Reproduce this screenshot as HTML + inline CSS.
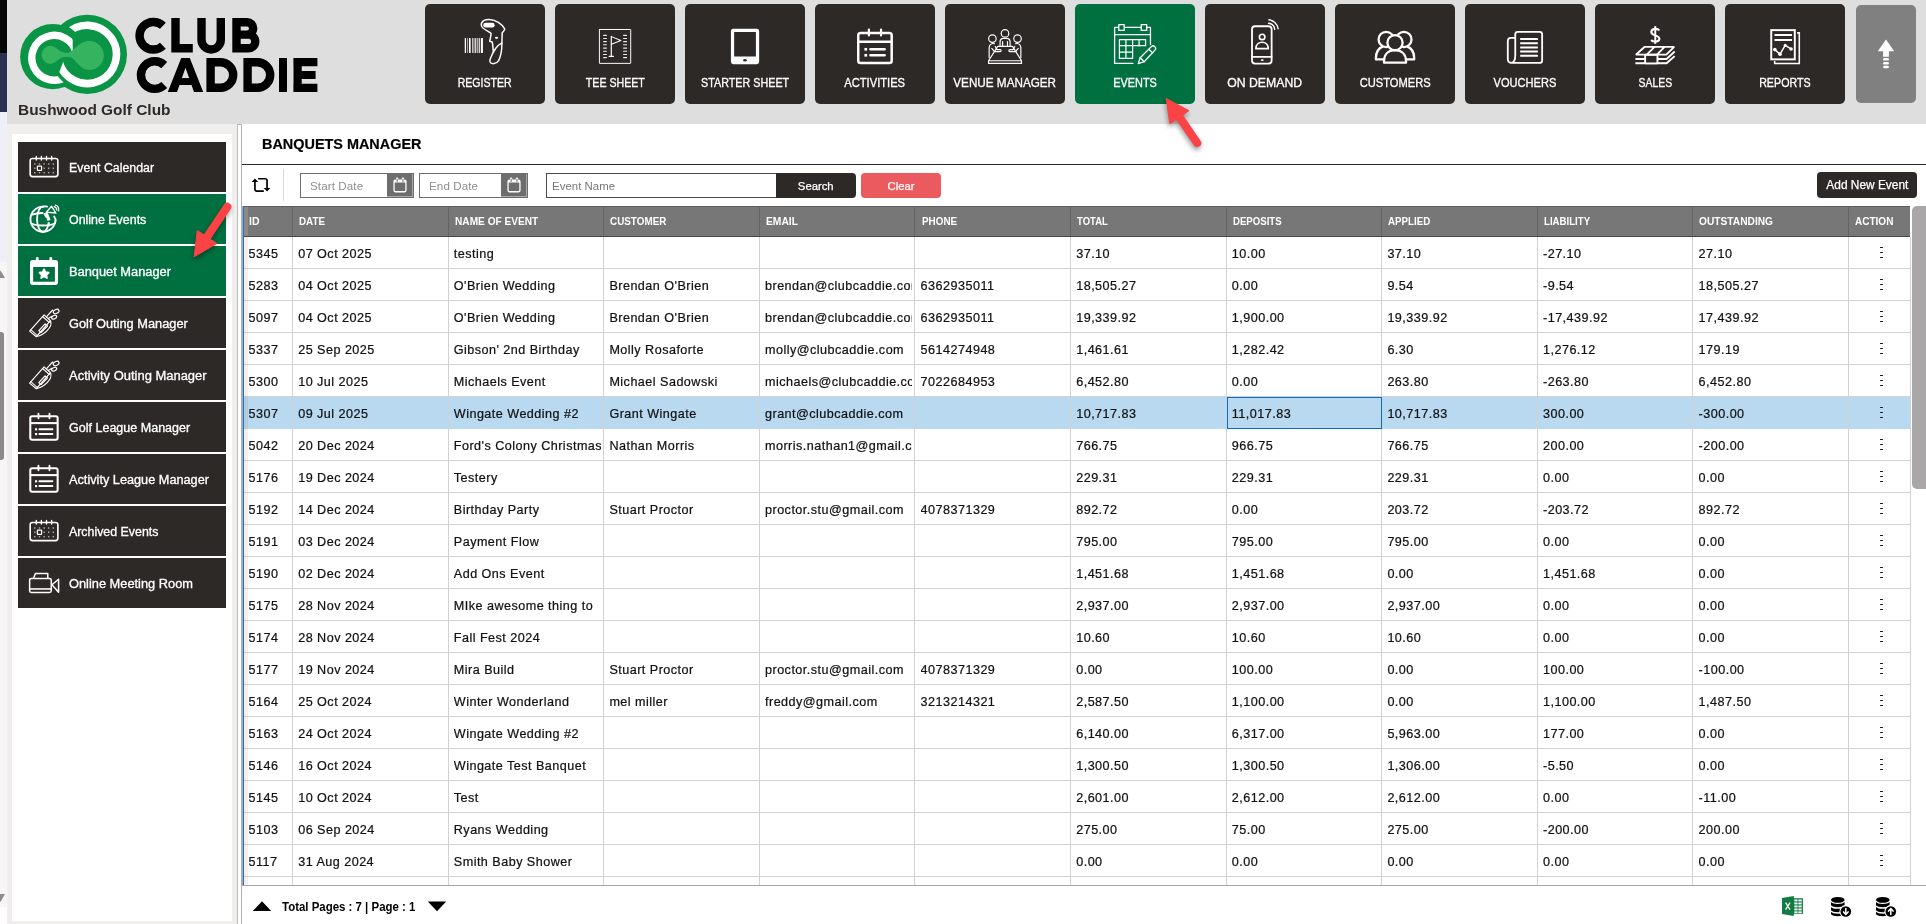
<!DOCTYPE html>
<html><head><meta charset="utf-8"><title>Banquets Manager</title>
<style>
*{box-sizing:border-box;margin:0;padding:0}
html,body{width:1926px;height:924px;overflow:hidden;background:#fff}
body{position:relative;font-family:"Liberation Sans",sans-serif;color:#000}
.a{position:absolute}
svg{position:absolute;overflow:visible}
.nb{position:absolute;top:4px;width:120px;height:100px;border-radius:5px;background:#2d2926}
.nl{position:absolute;left:0;width:120px;top:72.3px;-webkit-text-stroke:.3px #fff;height:15px;line-height:15px;text-align:center;color:#fff;font-size:12px;white-space:nowrap}
.nl span{display:inline-block;transform-origin:50% 50%}
.si{position:absolute;left:18px;width:208px;height:50px;background:#2d2926}
.sl{position:absolute;left:50.6px;top:18px;-webkit-text-stroke:.3px #fff;height:16px;line-height:16px;color:#fff;font-size:12px;white-space:nowrap}
.sl span{display:inline-block;transform-origin:0 50%}
.th{position:absolute;top:206px;height:31px;line-height:30px;color:#fff;font-weight:bold;font-size:11px;white-space:nowrap}
.th span{display:inline-block;transform-origin:0 50%}
.r{position:absolute;left:244px;width:1666px;height:32px;border-bottom:1px solid #d2d2d2}
.c{position:absolute;top:.8px;height:31px;line-height:32px;font-size:12.6px;letter-spacing:.47px;-webkit-text-stroke:.22px #111;white-space:nowrap;overflow:hidden;color:#111}
.vl{position:absolute;top:237px;width:1px;height:648px;background:#d2d2d2}
.dots{position:absolute;left:1635.8px;top:9.6px;width:3.2px;height:1.8px;border-radius:.8px;background:#111;box-shadow:0 4.95px 0 #111,0 9.9px 0 #111}

</style></head>
<body>
<div class="a" style="left:0;top:0;width:7px;height:53px;background:#050505"></div>
<div class="a" style="left:0;top:53px;width:7px;height:59px;background:#2b3050"></div>
<div class="a" style="left:0;top:112px;width:7px;height:150px;background:#eef0f6"></div>
<div class="a" style="left:0;top:262px;width:7px;height:645px;background:#f6f6f6"></div>
<svg style="left:0;top:268px" width="7" height="12" viewBox="0 0 7 12"><path d="M-4,10 L0.5,2.5 L5,10 Z" fill="#8c8c8c"/></svg>
<div class="a" style="left:-4px;top:332px;width:7.5px;height:128px;border-radius:3px;background:#8a8a8a"></div>
<svg style="left:0;top:892px" width="7" height="12" viewBox="0 0 7 12"><path d="M-4,2 L5,2 L0.5,10 Z" fill="#8c8c8c"/></svg>
<div class="a" style="left:7px;top:0;width:1919px;height:124px;background:#dedede"></div>
<svg style="left:0;top:0" width="340" height="124" viewBox="0 0 340 124"><defs><clipPath id="cl"><path d="M0,0 H72.7 V57.8 H130 V130 H0 Z"/></clipPath><clipPath id="cr"><path d="M66.2,25.1 L79.85,35.2 L65.19,56.86 L57.26,77.14 V130 H130 V0 H66.2 Z"/></clipPath></defs><circle cx="52.7" cy="56.7" r="32.6" fill="#0a9445"/><circle cx="87.3" cy="54.4" r="39.7" fill="#0a9445"/><path d="M76.11,53.14 A22.40,22.40 0 1 0 66.40,76.59" fill="none" stroke="#fff" stroke-width="7.4" clip-path="url(#cl)"/><path d="M78.31,82.08 A29.10,29.10 0 0 1 62.10,68.95" fill="none" stroke="#0a9445" stroke-width="15.2"/><path d="M65.67,34.93 A29.10,29.10 0 1 1 58.84,60.45" fill="none" stroke="#fff" stroke-width="7.6" clip-path="url(#cr)"/><path d="M50.6,45.8 C54,45.8 56.5,48.6 59.3,50.4 C62,52 64.5,52.9 67.1,52.9 C70.5,52.9 73.5,49.4 76.6,46.8 C80,43.7 84,41 89.3,41 A14.5,14.5 0 1 1 89.3,70 C83,70 80,66.2 76.6,62.6 C73.5,59.2 72,57.2 69.7,57.1 H64.5 C61.5,57.2 59.5,59 57.6,60.3 C55.5,61.8 53.5,63.9 50.6,63.9 A9.05,9.05 0 1 1 50.6,45.8 Z" fill="#36b35f"/><g fill="none" stroke="#000" stroke-width="8.4"><path d="M162.9,25.8 A13.8,13.8 0 1 0 162.9,45.7"/><path d="M175.5,18 V52.5 M171.3,48.3 H192.8"/><path d="M201.5,18 V39.8 A9.65,9.65 0 0 0 220.8,39.8 V18"/><path d="M236.5,18 V52.5 M232.3,22.2 H247 A6.2,6.2 0 0 1 247,34.6 H236.5 M236.5,34.6 H248.4 A6.85,6.85 0 0 1 248.4,48.3 H232.3"/><path d="M164.3,65.1 A13.8,13.8 0 1 0 164.3,85"/><path d="M210.6,58 V92 M206.4,62.2 H220.4 A12.8,12.8 0 0 1 220.4,87.8 H206.4"/><path d="M247.6,58 V92 M243.4,62.2 H257.4 A12.8,12.8 0 0 1 257.4,87.8 H243.4"/><path d="M283,58 V92" stroke-width="8"/><path d="M297.6,58 V92 M293.4,62.1 H317.4 M297,75 H315.6 M293.4,87.9 H317.4" stroke-width="8.2"/></g><path fill="#000" fill-rule="evenodd" d="M167.8,92 L181.2,58 H189.8 L203.2,92 H194 L191.5,85 H179.5 L177,92 Z M181.9,77.9 H189.1 L185.5,67.8 Z"/></svg>
<div class="a" style="left:17.5px;top:100.7px;height:18px;line-height:18px;font-size:14.4px;font-weight:bold;color:#2d2926;white-space:nowrap"><span style="display:inline-block;transform-origin:0 50%;transform:scaleX(1.0718)">Bushwood Golf Club</span></div>
<div class="nb" style="left:425px;background:#2d2926"><div class="nl"><span style="transform:scaleX(0.8803)">REGISTER</span></div></div>
<svg style="left:455px;top:10px" width="60" height="60" viewBox="0 0 924 924"><rect x="150" y="432" width="20" height="230" fill="#fff" opacity="1"/><rect x="186" y="432" width="12" height="230" fill="#fff" opacity="0.75"/><rect x="215" y="432" width="26" height="230" fill="#fff" opacity="1"/><rect x="262" y="432" width="20" height="230" fill="#fff" opacity="0.7"/><rect x="286" y="432" width="18" height="230" fill="#fff" opacity="0.55"/><rect x="308" y="432" width="16" height="230" fill="#fff" opacity="0.8"/><rect x="332" y="432" width="24" height="230" fill="#fff" opacity="0.6"/><rect x="365" y="432" width="18" height="230" fill="#fff" opacity="0.9"/><rect x="398" y="432" width="32" height="230" fill="#fff" opacity="1"/><g fill="none" stroke="#fff" stroke-width="23" stroke-linejoin="round" stroke-linecap="round"><path d="M405,235 C398,172 470,140 535,146 C625,152 722,215 765,290 C772,312 742,328 727,350 L722,520 C722,600 702,720 672,780 C642,832 560,842 540,800 C524,760 572,700 592,640 C580,580 586,530 572,492 L534,480 L548,420 L556,362 C520,322 415,300 405,235 Z"/><path d="M722,512 C662,532 622,590 592,648"/></g><rect x="435" y="195" width="176" height="76" rx="38" fill="#fff"/><ellipse cx="640" cy="428" rx="25" ry="17" fill="#fff"/></svg>
<div class="nb" style="left:555px;background:#2d2926"><div class="nl"><span style="transform:scaleX(0.8848)">TEE SHEET</span></div></div>
<svg style="left:585px;top:10px" width="60" height="60" viewBox="0 0 924 924"><g fill="none" stroke="#fff" stroke-linecap="round" stroke-linejoin="round"><rect x="222" y="300" width="482" height="522" stroke-width="15" rx="4"/><g stroke-width="17" opacity=".92"><path d="M286,390 H330 M594,390 H640"/><path d="M286,438 H330 M594,438 H640"/><path d="M286,487 H330 M594,487 H640"/><path d="M286,535 H330 M594,535 H640"/><path d="M286,587 H330 M594,587 H640"/><path d="M286,635 H330 M594,635 H640"/><path d="M286,685 H330 M594,685 H640"/><path d="M286,733 H330 M594,733 H640"/></g><path d="M405,405 V715 M372,715 H438" stroke-width="18"/><path d="M408,410 L552,470 L408,526" stroke-width="16"/></g></svg>
<div class="nb" style="left:685px;background:#2d2926"><div class="nl"><span style="transform:scaleX(0.8957)">STARTER SHEET</span></div></div>
<svg style="left:715px;top:10px" width="60" height="60" viewBox="0 0 924 924"><path fill="#fff" fill-rule="evenodd" d="M283,290 H642 A38,38 0 0 1 680,328 V797 A38,38 0 0 1 642,835 H283 A38,38 0 0 1 245,797 V328 A38,38 0 0 1 283,290 Z M295,340 V715 H630 V340 Z"/><ellipse cx="462" cy="775" rx="28" ry="19" fill="#2d2926"/></svg>
<div class="nb" style="left:815px;background:#2d2926"><div class="nl"><span style="transform:scaleX(0.9304)">ACTIVITIES</span></div></div>
<svg style="left:845px;top:10px" width="60" height="60" viewBox="0 0 924 924"><g fill="none" stroke="#fff" stroke-linecap="round"><rect x="204" y="354" width="515" height="462" rx="36" stroke-width="38"/><path d="M204,490 H719" stroke-width="38" stroke-linecap="butt"/><path d="M368,300 V392 M555,300 V392" stroke-width="34"/><path d="M392,605 H610 M392,697 H610" stroke-width="40"/></g><rect x="299" y="584" width="42" height="42" fill="#fff"/><rect x="299" y="676" width="42" height="42" fill="#fff"/></svg>
<div class="nb" style="left:945px;background:#2d2926"><div class="nl"><span style="transform:scaleX(0.9757)">VENUE MANAGER</span></div></div>
<svg style="left:975px;top:10px" width="60" height="60" viewBox="0 0 924 924"><g fill="none" stroke="#fff" stroke-width="18" stroke-linecap="round" stroke-linejoin="round"><circle cx="462" cy="360" r="58"/><circle cx="268" cy="440" r="58"/><circle cx="655" cy="440" r="58"/><path d="M386,548 V492 C386,455 410,438 440,438 H485 C520,438 540,455 540,492 V548"/><path d="M425,548 V485 M500,548 V485"/><path d="M350,560 H578 L716,782 H209 Z"/><path d="M209,782 V822 H716 V782"/><path d="M300,520 C258,506 222,528 218,580 V735"/><path d="M258,592 L300,642 H385 C408,642 408,610 385,610 H338 L312,562"/><path d="M624,520 C666,506 702,528 706,580 V735"/><path d="M666,592 L624,642 H539 C516,642 516,610 539,610 H586 L612,562"/></g></svg>
<div class="nb" style="left:1075px;background:#007041"><div class="nl"><span style="transform:scaleX(0.9081)">EVENTS</span></div></div>
<svg style="left:1105px;top:10px" width="60" height="60" viewBox="0 0 924 924"><g fill="none" stroke="#fff" stroke-width="20" stroke-linecap="round" stroke-linejoin="round"><path d="M700,530 V268 H148 V822 H430"/><path d="M148,378 H700"/><rect x="212" y="225" width="84" height="90" fill="#007041"/><rect x="558" y="225" width="84" height="90" fill="#007041"/><g stroke-width="19"><path d="M222,455 H625 V550 H222 Z"/><path d="M222,550 V745 H425 V550"/><path d="M222,650 H425 M322,455 V745 M425,455 V550 M525,455 V550"/></g><path d="M512,826 L542,736 L716,562 C734,546 752,550 766,564 C782,580 786,598 772,614 L604,796 Z"/><path d="M542,736 L604,796 M672,606 L734,660"/></g></svg>
<div class="nb" style="left:1205px;background:#2d2926"><div class="nl"><span style="transform:scaleX(1.0199)">ON DEMAND</span></div></div>
<svg style="left:1235px;top:10px" width="60" height="60" viewBox="0 0 924 924"><g fill="none" stroke="#fff" stroke-linecap="round" stroke-linejoin="round"><rect x="262" y="250" width="302" height="575" rx="46" stroke-width="28"/><path d="M262,722 H564" stroke-width="26"/><circle cx="418" cy="415" r="42" stroke-width="26"/><path d="M322,595 C322,530 370,497 418,497 C466,497 512,530 512,595 Z" stroke-width="26"/><path d="M516,205 A108,108 0 0 1 612,297" stroke-width="22"/><path d="M522,151 A162,162 0 0 1 665,289" stroke-width="22"/></g><ellipse cx="420" cy="771" rx="24" ry="13" fill="#fff"/></svg>
<div class="nb" style="left:1335px;background:#2d2926"><div class="nl"><span style="transform:scaleX(0.9286)">CUSTOMERS</span></div></div>
<svg style="left:1365px;top:10px" width="60" height="60" viewBox="0 0 924 924"><g fill="none" stroke="#fff" stroke-width="35" stroke-linejoin="round"><circle cx="326" cy="453" r="117"/><circle cx="599" cy="453" r="117"/><path d="M300,762 H168 V740 C168,640 215,585 275,560"/><path d="M625,762 H757 V740 C757,640 710,585 650,560"/><path d="M293,812 V790 C293,688 355,618 462,618 C570,618 632,688 632,790 V812 Z" fill="#2d2926"/><circle cx="462" cy="503" r="117" fill="#2d2926"/></g></svg>
<div class="nb" style="left:1465px;background:#2d2926"><div class="nl"><span style="transform:scaleX(0.9234)">VOUCHERS</span></div></div>
<svg style="left:1495px;top:10px" width="60" height="60" viewBox="0 0 924 924"><g fill="none" stroke="#fff" stroke-width="28" stroke-linecap="round" stroke-linejoin="round"><path d="M312,430 H245 C208,430 197,450 197,485 V755 C197,800 218,815 258,815 H688 C714,815 726,800 726,777 V375 C726,350 714,337 688,337 H350 C324,337 312,350 312,375 V700 C312,765 300,800 258,815"/><path d="M388,448 H660 M388,512 H660 M388,578 H660 M388,640 H660 M388,705 H660 " stroke-width="30" stroke-linecap="butt"/></g></svg>
<div class="nb" style="left:1595px;background:#2d2926"><div class="nl"><span style="transform:scaleX(0.8684)">SALES</span></div></div>
<svg style="left:1625px;top:10px" width="60" height="60" viewBox="0 0 924 924"><g fill="none" stroke="#fff" stroke-width="29" stroke-linejoin="bevel"><path d="M528,316 C505,280 408,278 405,338 C404,398 530,384 530,444 C528,500 428,494 402,462" stroke-width="32"/><path d="M466,248 V522" stroke-width="30"/><path d="M160,755 H640 L765,640 M160,820 H640 L765,710"/><rect x="310" y="690" width="190" height="132" fill="#2d2926"/><path d="M304,567 H758 L636,688 H168 Z M455,567 L335,688 M610,567 L492,688"/></g></svg>
<div class="nb" style="left:1725px;background:#2d2926"><div class="nl"><span style="transform:scaleX(0.8911)">REPORTS</span></div></div>
<svg style="left:1755px;top:10px" width="60" height="60" viewBox="0 0 924 924"><g fill="none" stroke="#fff" stroke-linejoin="miter"><path d="M648,352 H682 V823 H303 V785" stroke-width="24"/><rect x="250" y="310" width="363" height="450" stroke-width="30"/><path d="M300,385 H570 M300,462 H570" stroke-width="30"/><path d="M305,610 L385,680 L465,545 L555,600" stroke-width="22" stroke-linejoin="round"/></g><circle cx="305" cy="610" r="28" fill="#fff"/><circle cx="385" cy="680" r="28" fill="#fff"/><circle cx="465" cy="545" r="24" fill="#fff"/><circle cx="555" cy="600" r="28" fill="#fff"/></svg>
<div class="a" style="left:1856px;top:5px;width:60px;height:98px;border-radius:5px;background:#808080"></div>
<svg style="left:1870px;top:36px" width="32" height="36" viewBox="0 0 32 36"><path d="M16,3.6 L24.2,15.2 H18.9 V20.8 H13.1 V15.2 H7.8 Z" fill="#fff"/><rect x="13.1" y="22" width="5.8" height="2.6" rx="1.2" fill="#fff"/><rect x="13.1" y="25.9" width="5.8" height="2.6" rx="1.2" fill="#fff"/><rect x="13.1" y="29.7" width="5.8" height="2.6" rx="1.3" fill="#fff"/></svg>
<div class="a" style="left:7px;top:124px;width:230px;height:800px;background:#f0efed"></div>
<div class="a" style="left:12px;top:134px;width:220px;height:787px;background:#fff"></div>
<div class="si" style="top:142px;background:#2d2926"><div class="sl"><span style="transform:scaleX(1.0276)">Event Calendar</span></div></div>
<svg style="left:18px;top:142px" width="60" height="50" viewBox="0 0 1109 924"><rect x="225" y="305" width="512" height="335" rx="42" fill="none" stroke="#fff" stroke-width="30"/><path d="M338,268 V332 M432,268 V332 M527,268 V332 M622,268 V332 " stroke="#fff" stroke-width="26" stroke-linecap="round"/><rect x="297" y="394" width="26" height="26" opacity=".62" fill="#fff"/><rect x="384" y="394" width="26" height="26" opacity=".62" fill="#fff"/><rect x="470" y="394" width="26" height="26" opacity=".62" fill="#fff"/><rect x="554" y="394" width="26" height="26" opacity=".62" fill="#fff"/><rect x="640" y="394" width="26" height="26" opacity=".62" fill="#fff"/><rect x="297" y="472" width="26" height="26" opacity=".62" fill="#fff"/><rect x="384" y="472" width="26" height="26" opacity=".62" fill="#fff"/><rect x="470" y="472" width="26" height="26" opacity=".62" fill="#fff"/><rect x="554" y="472" width="26" height="26" opacity=".62" fill="#fff"/><rect x="640" y="472" width="26" height="26" opacity=".62" fill="#fff"/><rect x="297" y="554" width="26" height="26" opacity=".62" fill="#fff"/><rect x="384" y="554" width="26" height="26" opacity=".62" fill="#fff"/><rect x="470" y="554" width="26" height="26" opacity=".62" fill="#fff"/><rect x="554" y="554" width="26" height="26" opacity=".62" fill="#fff"/><rect x="640" y="554" width="26" height="26" opacity=".62" fill="#fff"/><rect x="358" y="446" width="78" height="78" rx="8" fill="#2d2926" stroke="#fff" stroke-width="22"/></svg>
<div class="si" style="top:194px;background:#007041"><div class="sl"><span style="transform:scaleX(1.0347)">Online Events</span></div></div>
<svg style="left:18px;top:194px" width="60" height="50" viewBox="0 0 1109 924"><g fill="none" stroke="#fff" stroke-width="34" stroke-linecap="round" stroke-linejoin="round"><circle cx="462" cy="465" r="232"/><ellipse cx="462" cy="465" rx="110" ry="232"/><path d="M248,385 C330,355 420,350 470,352"/><path d="M245,545 C340,595 585,595 680,545"/></g><path d="M470,225 L770,180 L790,470 L640,500 L560,540 L470,420 Z" fill="#007041"/><g fill="none" stroke="#fff" stroke-linecap="round" stroke-linejoin="round"><path d="M540,232 C500,225 470,228 440,240" stroke-width="34"/><path d="M668,415 C690,445 696,470 694,500" stroke-width="34"/><path d="M525,335 L620,225 L700,352 Z" stroke-width="26"/><path d="M668,234 C698,242 716,268 718,300" stroke-width="21"/><path d="M690,206 C735,216 758,256 752,312" stroke-width="21"/></g><path d="M478,365 L540,338 L588,462 L590,480 L545,486 L538,440 L515,432 Z" fill="#fff" stroke="#fff" stroke-width="14" stroke-linejoin="round"/><path d="M568,520 V600" stroke="#fff" stroke-width="30"/></svg>
<div class="si" style="top:246px;background:#007041"><div class="sl"><span style="transform:scaleX(1.0691)">Banquet Manager</span></div></div>
<svg style="left:18px;top:246px" width="60" height="50" viewBox="0 0 1109 924"><path fill="#fff" fill-rule="evenodd" d="M272,258 H690 A50,50 0 0 1 740,308 V670 A50,50 0 0 1 690,720 H272 A50,50 0 0 1 222,670 V308 A50,50 0 0 1 272,258 Z M280,388 V662 H682 V388 Z"/><rect x="330" y="205" width="52" height="80" rx="26" fill="#fff"/><rect x="581" y="205" width="52" height="80" rx="26" fill="#fff"/><polygon points="482,428 509,483 569,492 526,534 536,594 482,566 428,594 438,534 395,492 455,483" fill="#fff" stroke="#fff" stroke-width="30" stroke-linejoin="round"/></svg>
<div class="si" style="top:298px;background:#2d2926"><div class="sl"><span style="transform:scaleX(1.0665)">Golf Outing Manager</span></div></div>
<svg style="left:18px;top:298px" width="60" height="50" viewBox="0 0 1109 924"><g fill="none" stroke="#fff" stroke-width="22" stroke-linecap="round" stroke-linejoin="round"><path d="M215,612 L482,312 L600,420 L338,716 Z"/><path d="M236,588 L356,694" opacity=".8"/><path d="M455,342 L575,450"/><path d="M385,602 L500,478 L545,518 L425,640 Z"/><path d="M604,430 C640,540 480,690 345,712"/><path d="M528,345 L640,222"/><path d="M565,375 L628,338"/><ellipse cx="705" cy="250" rx="56" ry="36" transform="rotate(-25 705 250)"/><ellipse cx="668" cy="355" rx="50" ry="30" transform="rotate(-25 668 355)"/></g></svg>
<div class="si" style="top:350px;background:#2d2926"><div class="sl"><span style="transform:scaleX(1.0801)">Activity Outing Manager</span></div></div>
<svg style="left:18px;top:350px" width="60" height="50" viewBox="0 0 1109 924"><g fill="none" stroke="#fff" stroke-width="22" stroke-linecap="round" stroke-linejoin="round"><path d="M215,612 L482,312 L600,420 L338,716 Z"/><path d="M236,588 L356,694" opacity=".8"/><path d="M455,342 L575,450"/><path d="M385,602 L500,478 L545,518 L425,640 Z"/><path d="M604,430 C640,540 480,690 345,712"/><path d="M528,345 L640,222"/><path d="M565,375 L628,338"/><ellipse cx="705" cy="250" rx="56" ry="36" transform="rotate(-25 705 250)"/><ellipse cx="668" cy="355" rx="50" ry="30" transform="rotate(-25 668 355)"/></g></svg>
<div class="si" style="top:402px;background:#2d2926"><div class="sl"><span style="transform:scaleX(1.0441)">Golf League Manager</span></div></div>
<svg style="left:18px;top:402px" width="60" height="50" viewBox="0 0 1109 924"><g fill="none" stroke="#fff" stroke-linecap="round"><rect x="227" y="264" width="506" height="432" rx="36" stroke-width="38"/><path d="M227,390 H733" stroke-width="38" stroke-linecap="butt"/><path d="M378,215 V300 M582,215 V300" stroke-width="34"/><path d="M396,504 H636 M396,592 H636" stroke-width="36"/></g><rect x="314" y="485" width="40" height="40" fill="#fff"/><rect x="314" y="573" width="40" height="40" fill="#fff"/></svg>
<div class="si" style="top:454px;background:#2d2926"><div class="sl"><span style="transform:scaleX(1.0600)">Activity League Manager</span></div></div>
<svg style="left:18px;top:454px" width="60" height="50" viewBox="0 0 1109 924"><g fill="none" stroke="#fff" stroke-linecap="round"><rect x="227" y="264" width="506" height="432" rx="36" stroke-width="38"/><path d="M227,390 H733" stroke-width="38" stroke-linecap="butt"/><path d="M378,215 V300 M582,215 V300" stroke-width="34"/><path d="M396,504 H636 M396,592 H636" stroke-width="36"/></g><rect x="314" y="485" width="40" height="40" fill="#fff"/><rect x="314" y="573" width="40" height="40" fill="#fff"/></svg>
<div class="si" style="top:506px;background:#2d2926"><div class="sl"><span style="transform:scaleX(1.0310)">Archived Events</span></div></div>
<svg style="left:18px;top:506px" width="60" height="50" viewBox="0 0 1109 924"><rect x="225" y="305" width="512" height="335" rx="42" fill="none" stroke="#fff" stroke-width="30"/><path d="M338,268 V332 M432,268 V332 M527,268 V332 M622,268 V332 " stroke="#fff" stroke-width="26" stroke-linecap="round"/><rect x="297" y="394" width="26" height="26" opacity=".62" fill="#fff"/><rect x="384" y="394" width="26" height="26" opacity=".62" fill="#fff"/><rect x="470" y="394" width="26" height="26" opacity=".62" fill="#fff"/><rect x="554" y="394" width="26" height="26" opacity=".62" fill="#fff"/><rect x="640" y="394" width="26" height="26" opacity=".62" fill="#fff"/><rect x="297" y="472" width="26" height="26" opacity=".62" fill="#fff"/><rect x="384" y="472" width="26" height="26" opacity=".62" fill="#fff"/><rect x="470" y="472" width="26" height="26" opacity=".62" fill="#fff"/><rect x="554" y="472" width="26" height="26" opacity=".62" fill="#fff"/><rect x="640" y="472" width="26" height="26" opacity=".62" fill="#fff"/><rect x="297" y="554" width="26" height="26" opacity=".62" fill="#fff"/><rect x="384" y="554" width="26" height="26" opacity=".62" fill="#fff"/><rect x="470" y="554" width="26" height="26" opacity=".62" fill="#fff"/><rect x="554" y="554" width="26" height="26" opacity=".62" fill="#fff"/><rect x="640" y="554" width="26" height="26" opacity=".62" fill="#fff"/><rect x="358" y="446" width="78" height="78" rx="8" fill="#2d2926" stroke="#fff" stroke-width="22"/></svg>
<div class="si" style="top:558px;background:#2d2926"><div class="sl"><span style="transform:scaleX(1.0684)">Online Meeting Room</span></div></div>
<svg style="left:18px;top:558px" width="60" height="50" viewBox="0 0 1109 924"><g fill="none" stroke="#fff" stroke-width="28" stroke-linejoin="round"><rect x="215" y="380" width="400" height="258" rx="32"/><path d="M215,572 H615" stroke-width="34" opacity=".85"/><path d="M285,378 L322,287 H550 V378"/><path d="M628,495 L750,392 V635 Z"/></g></svg>
<div class="a" style="left:237px;top:124px;width:5px;height:800px;background:#fff;border-left:1px solid #b9b9b9;border-right:1px solid #b0b0b0;border-top:1px solid #b9b9b9"></div>
<div class="a" style="left:261.8px;top:133.2px;height:22px;line-height:22px;font-size:14.2px;font-weight:bold;color:#000;-webkit-text-stroke:.2px #000;white-space:nowrap"><span style="display:inline-block;transform-origin:0 50%;transform:scaleX(1.0166)">BANQUETS MANAGER</span></div>
<div class="a" style="left:242px;top:164px;width:1684px;height:1px;background:#2a2a2a"></div>
<svg style="left:246px;top:170px" width="50" height="30" viewBox="0 0 1540 924"><g fill="none" stroke="#000" stroke-width="52" stroke-linecap="round" stroke-linejoin="round"><path d="M275,340 V590 C275,630 295,650 335,650 H530"/><path d="M395,270 H590 C630,270 648,290 648,330 V560"/></g><path d="M275,262 L378,372 H172 Z" fill="#000"/><path d="M648,662 L545,552 H751 Z" fill="#000"/></svg>
<div class="a" style="left:283px;top:169px;width:1px;height:32px;background:#d9d9d9"></div>
<div class="a" style="left:300px;top:173px;width:114px;height:25px;border:1.5px solid #6d6d6d;background:#fff"><div class="a" style="right:0;top:0;bottom:0;width:26px;background:#6d6d6d;box-shadow:inset -1px -1px 0 0 #a9a9a9"></div><svg style="left:91.6px;top:3.2px" width="14" height="16" viewBox="0 0 14 16"><path d="M2.2,2.6 H11.8 A1.8,1.8 0 0 1 13.6,4.4 V13.6 A1.8,1.8 0 0 1 11.8,15.4 H2.2 A1.8,1.8 0 0 1 0.4,13.6 V4.4 A1.8,1.8 0 0 1 2.2,2.6 Z M1.7,5.6 V13.2 A0.9,0.9 0 0 0 2.6,14.1 H11.4 A0.9,0.9 0 0 0 12.3,13.2 V5.6 Z" fill="#fff" fill-rule="evenodd"/><rect x="3" y="0.6" width="2.3" height="3.6" rx="1" fill="#fff"/><rect x="8.8" y="0.6" width="2.3" height="3.6" rx="1" fill="#fff"/><rect x="3.6" y="1.8" width="1.1" height="3" fill="#6d6d6d"/><rect x="9.4" y="1.8" width="1.1" height="3" fill="#6d6d6d"/></svg><div class="a" style="left:9px;top:4px;height:16px;line-height:16px;font-size:11.6px;letter-spacing:.1px;color:#8e8e8e;white-space:nowrap">Start Date</div></div>
<div class="a" style="left:419px;top:173px;width:109px;height:25px;border:1.5px solid #6d6d6d;background:#fff"><div class="a" style="right:0;top:0;bottom:0;width:26px;background:#6d6d6d;box-shadow:inset -1px -1px 0 0 #a9a9a9"></div><svg style="left:86.6px;top:3.2px" width="14" height="16" viewBox="0 0 14 16"><path d="M2.2,2.6 H11.8 A1.8,1.8 0 0 1 13.6,4.4 V13.6 A1.8,1.8 0 0 1 11.8,15.4 H2.2 A1.8,1.8 0 0 1 0.4,13.6 V4.4 A1.8,1.8 0 0 1 2.2,2.6 Z M1.7,5.6 V13.2 A0.9,0.9 0 0 0 2.6,14.1 H11.4 A0.9,0.9 0 0 0 12.3,13.2 V5.6 Z" fill="#fff" fill-rule="evenodd"/><rect x="3" y="0.6" width="2.3" height="3.6" rx="1" fill="#fff"/><rect x="8.8" y="0.6" width="2.3" height="3.6" rx="1" fill="#fff"/><rect x="3.6" y="1.8" width="1.1" height="3" fill="#6d6d6d"/><rect x="9.4" y="1.8" width="1.1" height="3" fill="#6d6d6d"/></svg><div class="a" style="left:9px;top:4px;height:16px;line-height:16px;font-size:11.6px;letter-spacing:.1px;color:#8e8e8e;white-space:nowrap">End Date</div></div>
<div class="a" style="left:546px;top:173px;width:231px;height:25px;border:1px solid #4a4a4a;background:#fff"><div class="a" style="left:5px;top:3.8px;height:17px;line-height:17px;font-size:11.4px;letter-spacing:.05px;color:#777;white-space:nowrap">Event Name</div></div>
<div class="a" style="left:775.5px;top:173px;width:80.5px;height:25px;border-radius:0 4px 4px 0;background:#2d2926;color:#fff;text-align:center;line-height:26.6px;font-size:11.3px;letter-spacing:0;-webkit-text-stroke:.25px #fff">Search</div>
<div class="a" style="left:861px;top:173px;width:80px;height:25px;border-radius:4px;background:#eb5a5f;color:#fff;text-align:center;line-height:26.6px;font-size:11.3px;letter-spacing:0;-webkit-text-stroke:.25px #fff">Clear</div>
<div class="a" style="left:1817px;top:172px;width:100px;height:26px;border-radius:4px;background:#2d2926;color:#fff;text-align:center;line-height:27.6px;font-size:12px;-webkit-text-stroke:.25px #fff;white-space:nowrap"><span style="display:inline-block;transform-origin:50% 50%;transform:scaleX(0.9914)">Add New Event</span></div>
<div class="a" style="left:244px;top:205.5px;width:1666px;height:31.5px;background:#777;border-top:1px solid #5c5c5c;border-bottom:1.5px solid #464646"></div>
<div class="a" style="left:244px;top:206.5px;width:4px;height:29px;background:#8b8b8b"></div>
<div class="a" style="left:292px;top:206px;width:1px;height:30px;background:#646464"></div>
<div class="a" style="left:448px;top:206px;width:1px;height:30px;background:#646464"></div>
<div class="a" style="left:603px;top:206px;width:1px;height:30px;background:#646464"></div>
<div class="a" style="left:759px;top:206px;width:1px;height:30px;background:#646464"></div>
<div class="a" style="left:914px;top:206px;width:1px;height:30px;background:#646464"></div>
<div class="a" style="left:1070px;top:206px;width:1px;height:30px;background:#646464"></div>
<div class="a" style="left:1226px;top:206px;width:1px;height:30px;background:#646464"></div>
<div class="a" style="left:1381px;top:206px;width:1px;height:30px;background:#646464"></div>
<div class="a" style="left:1537px;top:206px;width:1px;height:30px;background:#646464"></div>
<div class="a" style="left:1692px;top:206px;width:1px;height:30px;background:#646464"></div>
<div class="a" style="left:1848px;top:206px;width:1px;height:30px;background:#646464"></div>
<div class="th" style="left:248.5px"><span style="transform:scaleX(0.9545)">ID</span></div>
<div class="th" style="left:298.7px"><span style="transform:scaleX(0.8926)">DATE</span></div>
<div class="th" style="left:454.7px"><span style="transform:scaleX(0.9209)">NAME OF EVENT</span></div>
<div class="th" style="left:610.4px"><span style="transform:scaleX(0.8988)">CUSTOMER</span></div>
<div class="th" style="left:766.0px"><span style="transform:scaleX(0.9351)">EMAIL</span></div>
<div class="th" style="left:922.0px"><span style="transform:scaleX(0.8998)">PHONE</span></div>
<div class="th" style="left:1076.9px"><span style="transform:scaleX(0.8641)">TOTAL</span></div>
<div class="th" style="left:1232.7px"><span style="transform:scaleX(0.8737)">DEPOSITS</span></div>
<div class="th" style="left:1388.0px"><span style="transform:scaleX(0.8872)">APPLIED</span></div>
<div class="th" style="left:1543.8px"><span style="transform:scaleX(0.8772)">LIABILITY</span></div>
<div class="th" style="left:1699.0px"><span style="transform:scaleX(0.9268)">OUTSTANDING</span></div>
<div class="th" style="left:1855.2px"><span style="transform:scaleX(0.9107)">ACTION</span></div>
<div class="r" style="top:237px"><div class="c" style="left:4.5px;width:41.5px">5345</div><div class="c" style="left:54.2px;width:147.8px">07 Oct 2025</div><div class="c" style="left:209.8px;width:147.2px">testing</div><div class="c" style="left:832.2px;width:147.8px">37.10</div><div class="c" style="left:987.8px;width:147.2px">10.00</div><div class="c" style="left:1143.4px;width:147.6px">37.10</div><div class="c" style="left:1299.0px;width:147.0px">-27.10</div><div class="c" style="left:1454.6px;width:147.4px">27.10</div><div class="dots"></div></div>
<div class="r" style="top:269px"><div class="c" style="left:4.5px;width:41.5px">5283</div><div class="c" style="left:54.2px;width:147.8px">04 Oct 2025</div><div class="c" style="left:209.8px;width:147.2px">O&#x27;Brien Wedding</div><div class="c" style="left:365.4px;width:147.6px">Brendan O&#x27;Brien</div><div class="c" style="left:521.0px;width:147.0px">brendan@clubcaddie.com</div><div class="c" style="left:676.6px;width:147.4px">6362935011</div><div class="c" style="left:832.2px;width:147.8px">18,505.27</div><div class="c" style="left:987.8px;width:147.2px">0.00</div><div class="c" style="left:1143.4px;width:147.6px">9.54</div><div class="c" style="left:1299.0px;width:147.0px">-9.54</div><div class="c" style="left:1454.6px;width:147.4px">18,505.27</div><div class="dots"></div></div>
<div class="r" style="top:301px"><div class="c" style="left:4.5px;width:41.5px">5097</div><div class="c" style="left:54.2px;width:147.8px">04 Oct 2025</div><div class="c" style="left:209.8px;width:147.2px">O&#x27;Brien Wedding</div><div class="c" style="left:365.4px;width:147.6px">Brendan O&#x27;Brien</div><div class="c" style="left:521.0px;width:147.0px">brendan@clubcaddie.com</div><div class="c" style="left:676.6px;width:147.4px">6362935011</div><div class="c" style="left:832.2px;width:147.8px">19,339.92</div><div class="c" style="left:987.8px;width:147.2px">1,900.00</div><div class="c" style="left:1143.4px;width:147.6px">19,339.92</div><div class="c" style="left:1299.0px;width:147.0px">-17,439.92</div><div class="c" style="left:1454.6px;width:147.4px">17,439.92</div><div class="dots"></div></div>
<div class="r" style="top:333px"><div class="c" style="left:4.5px;width:41.5px">5337</div><div class="c" style="left:54.2px;width:147.8px">25 Sep 2025</div><div class="c" style="left:209.8px;width:147.2px">Gibson&#x27; 2nd Birthday</div><div class="c" style="left:365.4px;width:147.6px">Molly Rosaforte</div><div class="c" style="left:521.0px;width:147.0px">molly@clubcaddie.com</div><div class="c" style="left:676.6px;width:147.4px">5614274948</div><div class="c" style="left:832.2px;width:147.8px">1,461.61</div><div class="c" style="left:987.8px;width:147.2px">1,282.42</div><div class="c" style="left:1143.4px;width:147.6px">6.30</div><div class="c" style="left:1299.0px;width:147.0px">1,276.12</div><div class="c" style="left:1454.6px;width:147.4px">179.19</div><div class="dots"></div></div>
<div class="r" style="top:365px"><div class="c" style="left:4.5px;width:41.5px">5300</div><div class="c" style="left:54.2px;width:147.8px">10 Jul 2025</div><div class="c" style="left:209.8px;width:147.2px">Michaels Event</div><div class="c" style="left:365.4px;width:147.6px">Michael Sadowski</div><div class="c" style="left:521.0px;width:147.0px">michaels@clubcaddie.com</div><div class="c" style="left:676.6px;width:147.4px">7022684953</div><div class="c" style="left:832.2px;width:147.8px">6,452.80</div><div class="c" style="left:987.8px;width:147.2px">0.00</div><div class="c" style="left:1143.4px;width:147.6px">263.80</div><div class="c" style="left:1299.0px;width:147.0px">-263.80</div><div class="c" style="left:1454.6px;width:147.4px">6,452.80</div><div class="dots"></div></div>
<div class="r" style="top:397px;background:#b9d9f0;border-bottom-color:#b9d9f0"><div class="c" style="left:4.5px;width:41.5px">5307</div><div class="c" style="left:54.2px;width:147.8px">09 Jul 2025</div><div class="c" style="left:209.8px;width:147.2px">Wingate Wedding #2</div><div class="c" style="left:365.4px;width:147.6px">Grant Wingate</div><div class="c" style="left:521.0px;width:147.0px">grant@clubcaddie.com</div><div class="c" style="left:832.2px;width:147.8px">10,717.83</div><div class="c" style="left:987.8px;width:147.2px">11,017.83</div><div class="c" style="left:1143.4px;width:147.6px">10,717.83</div><div class="c" style="left:1299.0px;width:147.0px">300.00</div><div class="c" style="left:1454.6px;width:147.4px">-300.00</div><div class="dots"></div></div>
<div class="r" style="top:429px"><div class="c" style="left:4.5px;width:41.5px">5042</div><div class="c" style="left:54.2px;width:147.8px">20 Dec 2024</div><div class="c" style="left:209.8px;width:147.2px">Ford&#x27;s Colony Christmas</div><div class="c" style="left:365.4px;width:147.6px">Nathan Morris</div><div class="c" style="left:521.0px;width:147.0px">morris.nathan1@gmail.com</div><div class="c" style="left:832.2px;width:147.8px">766.75</div><div class="c" style="left:987.8px;width:147.2px">966.75</div><div class="c" style="left:1143.4px;width:147.6px">766.75</div><div class="c" style="left:1299.0px;width:147.0px">200.00</div><div class="c" style="left:1454.6px;width:147.4px">-200.00</div><div class="dots"></div></div>
<div class="r" style="top:461px"><div class="c" style="left:4.5px;width:41.5px">5176</div><div class="c" style="left:54.2px;width:147.8px">19 Dec 2024</div><div class="c" style="left:209.8px;width:147.2px">Testery</div><div class="c" style="left:832.2px;width:147.8px">229.31</div><div class="c" style="left:987.8px;width:147.2px">229.31</div><div class="c" style="left:1143.4px;width:147.6px">229.31</div><div class="c" style="left:1299.0px;width:147.0px">0.00</div><div class="c" style="left:1454.6px;width:147.4px">0.00</div><div class="dots"></div></div>
<div class="r" style="top:493px"><div class="c" style="left:4.5px;width:41.5px">5192</div><div class="c" style="left:54.2px;width:147.8px">14 Dec 2024</div><div class="c" style="left:209.8px;width:147.2px">Birthday Party</div><div class="c" style="left:365.4px;width:147.6px">Stuart Proctor</div><div class="c" style="left:521.0px;width:147.0px">proctor.stu@gmail.com</div><div class="c" style="left:676.6px;width:147.4px">4078371329</div><div class="c" style="left:832.2px;width:147.8px">892.72</div><div class="c" style="left:987.8px;width:147.2px">0.00</div><div class="c" style="left:1143.4px;width:147.6px">203.72</div><div class="c" style="left:1299.0px;width:147.0px">-203.72</div><div class="c" style="left:1454.6px;width:147.4px">892.72</div><div class="dots"></div></div>
<div class="r" style="top:525px"><div class="c" style="left:4.5px;width:41.5px">5191</div><div class="c" style="left:54.2px;width:147.8px">03 Dec 2024</div><div class="c" style="left:209.8px;width:147.2px">Payment Flow</div><div class="c" style="left:832.2px;width:147.8px">795.00</div><div class="c" style="left:987.8px;width:147.2px">795.00</div><div class="c" style="left:1143.4px;width:147.6px">795.00</div><div class="c" style="left:1299.0px;width:147.0px">0.00</div><div class="c" style="left:1454.6px;width:147.4px">0.00</div><div class="dots"></div></div>
<div class="r" style="top:557px"><div class="c" style="left:4.5px;width:41.5px">5190</div><div class="c" style="left:54.2px;width:147.8px">02 Dec 2024</div><div class="c" style="left:209.8px;width:147.2px">Add Ons Event</div><div class="c" style="left:832.2px;width:147.8px">1,451.68</div><div class="c" style="left:987.8px;width:147.2px">1,451.68</div><div class="c" style="left:1143.4px;width:147.6px">0.00</div><div class="c" style="left:1299.0px;width:147.0px">1,451.68</div><div class="c" style="left:1454.6px;width:147.4px">0.00</div><div class="dots"></div></div>
<div class="r" style="top:589px"><div class="c" style="left:4.5px;width:41.5px">5175</div><div class="c" style="left:54.2px;width:147.8px">28 Nov 2024</div><div class="c" style="left:209.8px;width:147.2px">MIke awesome thing to</div><div class="c" style="left:832.2px;width:147.8px">2,937.00</div><div class="c" style="left:987.8px;width:147.2px">2,937.00</div><div class="c" style="left:1143.4px;width:147.6px">2,937.00</div><div class="c" style="left:1299.0px;width:147.0px">0.00</div><div class="c" style="left:1454.6px;width:147.4px">0.00</div><div class="dots"></div></div>
<div class="r" style="top:621px"><div class="c" style="left:4.5px;width:41.5px">5174</div><div class="c" style="left:54.2px;width:147.8px">28 Nov 2024</div><div class="c" style="left:209.8px;width:147.2px">Fall Fest 2024</div><div class="c" style="left:832.2px;width:147.8px">10.60</div><div class="c" style="left:987.8px;width:147.2px">10.60</div><div class="c" style="left:1143.4px;width:147.6px">10.60</div><div class="c" style="left:1299.0px;width:147.0px">0.00</div><div class="c" style="left:1454.6px;width:147.4px">0.00</div><div class="dots"></div></div>
<div class="r" style="top:653px"><div class="c" style="left:4.5px;width:41.5px">5177</div><div class="c" style="left:54.2px;width:147.8px">19 Nov 2024</div><div class="c" style="left:209.8px;width:147.2px">Mira Build</div><div class="c" style="left:365.4px;width:147.6px">Stuart Proctor</div><div class="c" style="left:521.0px;width:147.0px">proctor.stu@gmail.com</div><div class="c" style="left:676.6px;width:147.4px">4078371329</div><div class="c" style="left:832.2px;width:147.8px">0.00</div><div class="c" style="left:987.8px;width:147.2px">100.00</div><div class="c" style="left:1143.4px;width:147.6px">0.00</div><div class="c" style="left:1299.0px;width:147.0px">100.00</div><div class="c" style="left:1454.6px;width:147.4px">-100.00</div><div class="dots"></div></div>
<div class="r" style="top:685px"><div class="c" style="left:4.5px;width:41.5px">5164</div><div class="c" style="left:54.2px;width:147.8px">25 Oct 2024</div><div class="c" style="left:209.8px;width:147.2px">Winter Wonderland</div><div class="c" style="left:365.4px;width:147.6px">mel miller</div><div class="c" style="left:521.0px;width:147.0px">freddy@gmail.com</div><div class="c" style="left:676.6px;width:147.4px">3213214321</div><div class="c" style="left:832.2px;width:147.8px">2,587.50</div><div class="c" style="left:987.8px;width:147.2px">1,100.00</div><div class="c" style="left:1143.4px;width:147.6px">0.00</div><div class="c" style="left:1299.0px;width:147.0px">1,100.00</div><div class="c" style="left:1454.6px;width:147.4px">1,487.50</div><div class="dots"></div></div>
<div class="r" style="top:717px"><div class="c" style="left:4.5px;width:41.5px">5163</div><div class="c" style="left:54.2px;width:147.8px">24 Oct 2024</div><div class="c" style="left:209.8px;width:147.2px">Wingate Wedding #2</div><div class="c" style="left:832.2px;width:147.8px">6,140.00</div><div class="c" style="left:987.8px;width:147.2px">6,317.00</div><div class="c" style="left:1143.4px;width:147.6px">5,963.00</div><div class="c" style="left:1299.0px;width:147.0px">177.00</div><div class="c" style="left:1454.6px;width:147.4px">0.00</div><div class="dots"></div></div>
<div class="r" style="top:749px"><div class="c" style="left:4.5px;width:41.5px">5146</div><div class="c" style="left:54.2px;width:147.8px">16 Oct 2024</div><div class="c" style="left:209.8px;width:147.2px">Wingate Test Banquet</div><div class="c" style="left:832.2px;width:147.8px">1,300.50</div><div class="c" style="left:987.8px;width:147.2px">1,300.50</div><div class="c" style="left:1143.4px;width:147.6px">1,306.00</div><div class="c" style="left:1299.0px;width:147.0px">-5.50</div><div class="c" style="left:1454.6px;width:147.4px">0.00</div><div class="dots"></div></div>
<div class="r" style="top:781px"><div class="c" style="left:4.5px;width:41.5px">5145</div><div class="c" style="left:54.2px;width:147.8px">10 Oct 2024</div><div class="c" style="left:209.8px;width:147.2px">Test</div><div class="c" style="left:832.2px;width:147.8px">2,601.00</div><div class="c" style="left:987.8px;width:147.2px">2,612.00</div><div class="c" style="left:1143.4px;width:147.6px">2,612.00</div><div class="c" style="left:1299.0px;width:147.0px">0.00</div><div class="c" style="left:1454.6px;width:147.4px">-11.00</div><div class="dots"></div></div>
<div class="r" style="top:813px"><div class="c" style="left:4.5px;width:41.5px">5103</div><div class="c" style="left:54.2px;width:147.8px">06 Sep 2024</div><div class="c" style="left:209.8px;width:147.2px">Ryans Wedding</div><div class="c" style="left:832.2px;width:147.8px">275.00</div><div class="c" style="left:987.8px;width:147.2px">75.00</div><div class="c" style="left:1143.4px;width:147.6px">275.00</div><div class="c" style="left:1299.0px;width:147.0px">-200.00</div><div class="c" style="left:1454.6px;width:147.4px">200.00</div><div class="dots"></div></div>
<div class="r" style="top:845px"><div class="c" style="left:4.5px;width:41.5px">5117</div><div class="c" style="left:54.2px;width:147.8px">31 Aug 2024</div><div class="c" style="left:209.8px;width:147.2px">Smith Baby Shower</div><div class="c" style="left:832.2px;width:147.8px">0.00</div><div class="c" style="left:987.8px;width:147.2px">0.00</div><div class="c" style="left:1143.4px;width:147.6px">0.00</div><div class="c" style="left:1299.0px;width:147.0px">0.00</div><div class="c" style="left:1454.6px;width:147.4px">0.00</div><div class="dots"></div></div>
<div class="a" style="left:244px;top:237px;width:4px;height:648px;background:#f1f1f1;mix-blend-mode:multiply"></div>
<div class="vl" style="left:292px"></div>
<div class="vl" style="left:448px"></div>
<div class="vl" style="left:603px"></div>
<div class="vl" style="left:759px"></div>
<div class="vl" style="left:914px"></div>
<div class="vl" style="left:1070px"></div>
<div class="vl" style="left:1226px"></div>
<div class="vl" style="left:1381px"></div>
<div class="vl" style="left:1537px"></div>
<div class="vl" style="left:1692px"></div>
<div class="vl" style="left:1848px"></div>
<div class="vl" style="left:1910px"></div>
<div class="a" style="left:1227px;top:397px;width:155px;height:32px;border:1.3px solid #0a6cc4"></div>
<div class="a" style="left:242px;top:206px;width:1px;height:679px;background:#a9a9a9"></div>
<div class="a" style="left:242.9px;top:206px;width:1.4px;height:679px;background:#1873c9"></div>
<div class="a" style="left:242px;top:884.5px;width:1684px;height:1.5px;background:#a6a6a6"></div>
<div class="a" style="left:1912px;top:206px;width:20px;height:283px;border-radius:5px;background:#a9a7a7"></div>
<svg style="left:250px;top:896px" width="200" height="20" viewBox="0 0 200 20"><path d="M12,5.2 L21.2,15 H2.8 Z" fill="#000"/><path d="M187,15.2 L177.8,5.4 H196.2 Z" fill="#000"/></svg>
<div class="a" style="left:282.3px;top:898.8px;height:16px;line-height:16px;font-size:12px;font-weight:bold;white-space:nowrap"><span style="display:inline-block;transform-origin:0 50%;transform:scaleX(0.9539)">Total Pages : 7 | Page : 1</span></div>
<svg style="left:1780px;top:894px" width="26" height="24" viewBox="0 0 26 24"><rect x="12" y="4.2" width="10.9" height="15.8" fill="#107c41"/><g fill="#fff"><rect x="14.3" y="5.5" width="3.3" height="1.9"/><rect x="18.4" y="5.5" width="3.3" height="1.9"/><rect x="14.3" y="8.5" width="3.3" height="1.9"/><rect x="18.4" y="8.5" width="3.3" height="1.9"/><rect x="14.3" y="11.5" width="3.3" height="1.9"/><rect x="18.4" y="11.5" width="3.3" height="1.9"/><rect x="14.3" y="14.5" width="3.3" height="1.9"/><rect x="18.4" y="14.5" width="3.3" height="1.9"/><rect x="14.3" y="17.4" width="3.3" height="1.9"/><rect x="18.4" y="17.4" width="3.3" height="1.9"/></g><path d="M2,4.1 L13.8,2 V22 L2,19.9 Z" fill="#107c41"/><path d="M5.6,8.6 L10,15.6 M10,8.6 L5.6,15.6" stroke="#fff" stroke-width="1.25" fill="none"/></svg>
<svg style="left:1830.0px;top:895px" width="24" height="24" viewBox="0 0 24 24"><g fill="#000"><ellipse cx="7.8" cy="4.9" rx="6.8" ry="2.9"/><path d="M1,7 C2.5,9.6 13.1,9.6 14.6,7 V10.3 C13.1,12.9 2.5,12.9 1,10.3 Z"/><path d="M1,11.9 C2.5,14.5 13.1,14.5 14.6,11.9 V15.2 C13.1,17.8 2.5,17.8 1,15.2 Z"/><path d="M1,16.8 C2.5,19.4 13.1,19.4 14.6,16.8 V19.2 C13.1,21.8 2.5,21.8 1,19.2 Z"/><circle cx="15.8" cy="16.5" r="6.4" fill="#fff"/><circle cx="15.8" cy="16.5" r="5.3"/></g><path transform="translate(15.8 16.5)" d="M0,-2.9 V2.6 M-2.3,0.4 L0,2.9 L2.3,0.4" fill="none" stroke="#fff" stroke-width="1.5" stroke-linecap="round" stroke-linejoin="round"/></svg>
<svg style="left:1875.0px;top:895px" width="24" height="24" viewBox="0 0 24 24"><g fill="#000"><ellipse cx="7.8" cy="4.9" rx="6.8" ry="2.9"/><path d="M1,7 C2.5,9.6 13.1,9.6 14.6,7 V10.3 C13.1,12.9 2.5,12.9 1,10.3 Z"/><path d="M1,11.9 C2.5,14.5 13.1,14.5 14.6,11.9 V15.2 C13.1,17.8 2.5,17.8 1,15.2 Z"/><path d="M1,16.8 C2.5,19.4 13.1,19.4 14.6,16.8 V19.2 C13.1,21.8 2.5,21.8 1,19.2 Z"/><circle cx="15.8" cy="16.5" r="6.4" fill="#fff"/><circle cx="15.8" cy="16.5" r="5.3"/></g><path transform="translate(15.8 16.5)" d="M0,2.9 V-2.6 M-2.3,-0.4 L0,-2.9 L2.3,-0.4" fill="none" stroke="#fff" stroke-width="1.5" stroke-linecap="round" stroke-linejoin="round"/></svg>
<svg style="left:0;top:0;pointer-events:none" width="1926" height="924" viewBox="0 0 1926 924"><g transform="translate(-0.6 3)" fill="#000" stroke="#000" opacity=".38" style="filter:blur(2.5px)"><path d="M1166.2,98.4 L1188.9,110.7 L1169.9,123.7 Z"/><path d="M1179.4,117.2 L1197.2,143.0" fill="none" stroke-width="8.2" stroke-linecap="round"/></g><g fill="#fb4245" stroke="#fb4245" stroke-linejoin="round"><path d="M1166.2,98.4 L1188.9,110.7 L1169.9,123.7 Z"/><path d="M1179.4,117.2 L1197.2,143.0" fill="none" stroke-width="8.2" stroke-linecap="round"/></g></svg>
<svg style="left:0;top:0;pointer-events:none" width="1926" height="924" viewBox="0 0 1926 924"><g transform="translate(-0.6 3)" fill="#000" stroke="#000" opacity=".38" style="filter:blur(2.5px)"><path d="M194.1,256.8 L197.3,230.5 L216.8,243.5 Z"/><path d="M207.1,237.0 L227.3,206.8" fill="none" stroke-width="8.2" stroke-linecap="round"/></g><g fill="#fb4245" stroke="#fb4245" stroke-linejoin="round"><path d="M194.1,256.8 L197.3,230.5 L216.8,243.5 Z"/><path d="M207.1,237.0 L227.3,206.8" fill="none" stroke-width="8.2" stroke-linecap="round"/></g></svg>
</body></html>
